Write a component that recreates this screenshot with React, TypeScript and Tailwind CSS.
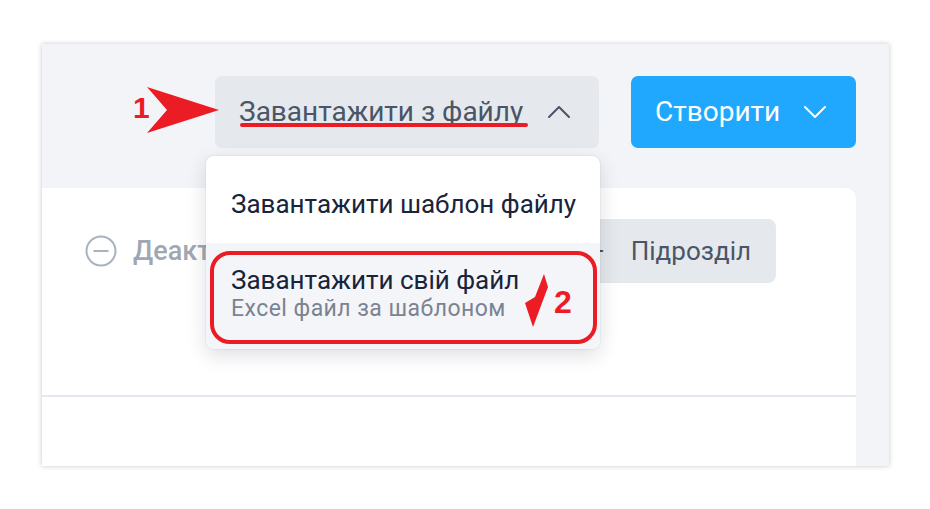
import { Plus } from "lucide-react";

// ---------------------------------------------------------------------------
// Small chevron used in both header buttons
// ---------------------------------------------------------------------------

function Chevron({ up, color }: { up?: boolean; color: string }) {
  return (
    <svg width="22" height="12" viewBox="0 0 22 12" fill="none" stroke={color} strokeWidth="2" strokeLinecap="round" strokeLinejoin="round">
      <polyline points={up ? "1,11 11,1 21,11" : "1,1 11,11 21,1"} />
    </svg>
  );
}

// ---------------------------------------------------------------------------
// Annotations drawn over the screenshot (red marks)
// ---------------------------------------------------------------------------

function Annotations() {
  return (
    <>
      {/* 1 + arrow pointing at the upload button */}
      <span className="absolute left-[91px] top-[49px] font-['Liberation_Sans',Arial,sans-serif] text-[30px] font-bold leading-none text-[#ec1c24]">
        1
      </span>
      <svg className="absolute left-0 top-0" width="847" height="422" viewBox="0 0 847 422">
        <polygon points="105,43 177,66 105,89 125,66" fill="#ec1c24" />
        <polygon points="502,230 506,243 491,283 483,259 493,253" fill="#ec1c24" />
      </svg>
      <div className="absolute left-[198px] top-[79px] h-[4px] w-[288px] rounded-full bg-[#ec1c24]" />

      {/* 2 + box around the second menu item */}
      <div className="absolute left-[168px] top-[207px] h-[93px] w-[387px] rounded-[20px] border-[4px] border-[#ec1c24]" />
      <span className="absolute left-[512px] top-[242px] font-['Liberation_Sans',Arial,sans-serif] text-[32px] font-bold leading-none text-[#ec1c24]">
        2
      </span>
    </>
  );
}

// ---------------------------------------------------------------------------
// Upload dropdown menu
// ---------------------------------------------------------------------------

function UploadMenu() {
  return (
    <div className="absolute left-[164px] top-[112px] w-[394px] overflow-hidden rounded-[8px] bg-white shadow-[0_6px_20px_rgba(15,23,42,0.14),0_0_2px_rgba(15,23,42,0.12)]">
      <div className="h-[87px] whitespace-nowrap px-[25px] pt-[33px] text-[26px] leading-[30px] text-[#18243a]">
        Завантажити шаблон файлу
      </div>
      <div className="h-[106px] whitespace-nowrap bg-[#f4f5f8] px-[25px] pt-[22px]">
        <div className="text-[26px] leading-[30px] text-[#18243a]">Завантажити свій файл</div>
        <div className="text-[23px] leading-[28px] tracking-[0.45px] text-[#7b8392]">Excel файл за шаблоном</div>
      </div>
    </div>
  );
}

// ---------------------------------------------------------------------------
// Page
// ---------------------------------------------------------------------------

export default function App() {
  return (
    <div className="h-[509px] w-[930px] bg-white pl-[42px] pt-[44px] font-['Roboto',sans-serif]">
      <div className="relative flex h-[422px] w-[847px] flex-col overflow-hidden bg-[#f2f4f7] shadow-[0_0_5px_rgba(0,0,0,0.22)]">
        {/* Header actions */}
        <div className="flex justify-end gap-[32px] pr-[33px] pt-[32px]">
          <button className="flex h-[72px] w-[384px] items-center justify-between whitespace-nowrap rounded-[7px] bg-[#e5e8ec] pl-[24px] pr-[29px] text-[28px] text-[#4a5567]">
            <span>Завантажити з файлу</span>
            <Chevron up color="#4a5567" />
          </button>
          <button className="flex h-[72px] w-[225px] items-center justify-between rounded-[7px] bg-[#1fa8fe] pl-[24px] pr-[30px] text-[28px] text-white">
            <span>Створити</span>
            <Chevron color="#ffffff" />
          </button>
        </div>

        {/* Card */}
        <div className="mr-[33px] mt-[40px] flex-1 rounded-tr-[10px] bg-white">
          <div className="flex items-center justify-between pl-[43px] pr-[80px] pt-[31px]">
            <div className="flex items-center gap-[16px] text-[27px] font-medium text-[#a0a7b3]">
              <svg width="32" height="32" viewBox="0 0 32 32" fill="none" stroke="#a9b2c0" strokeWidth="2">
                <circle cx="16" cy="16" r="14.5" />
                <line x1="8.5" y1="16" x2="23.5" y2="16" />
              </svg>
              <span>Деактивовані</span>
            </div>
            <button className="flex h-[64px] items-center gap-[24px] rounded-[8px] bg-[#e5e8ec] pl-[24px] pr-[25px] text-[26px] text-[#4a5567]">
              <Plus className="h-[22px] w-[22px]" strokeWidth={2} />
              <span>Підрозділ</span>
            </button>
          </div>
          <div className="mt-[112px] h-[2px] bg-[#e4e8ef]" />
        </div>

        <UploadMenu />
        <Annotations />
      </div>
    </div>
  );
}
